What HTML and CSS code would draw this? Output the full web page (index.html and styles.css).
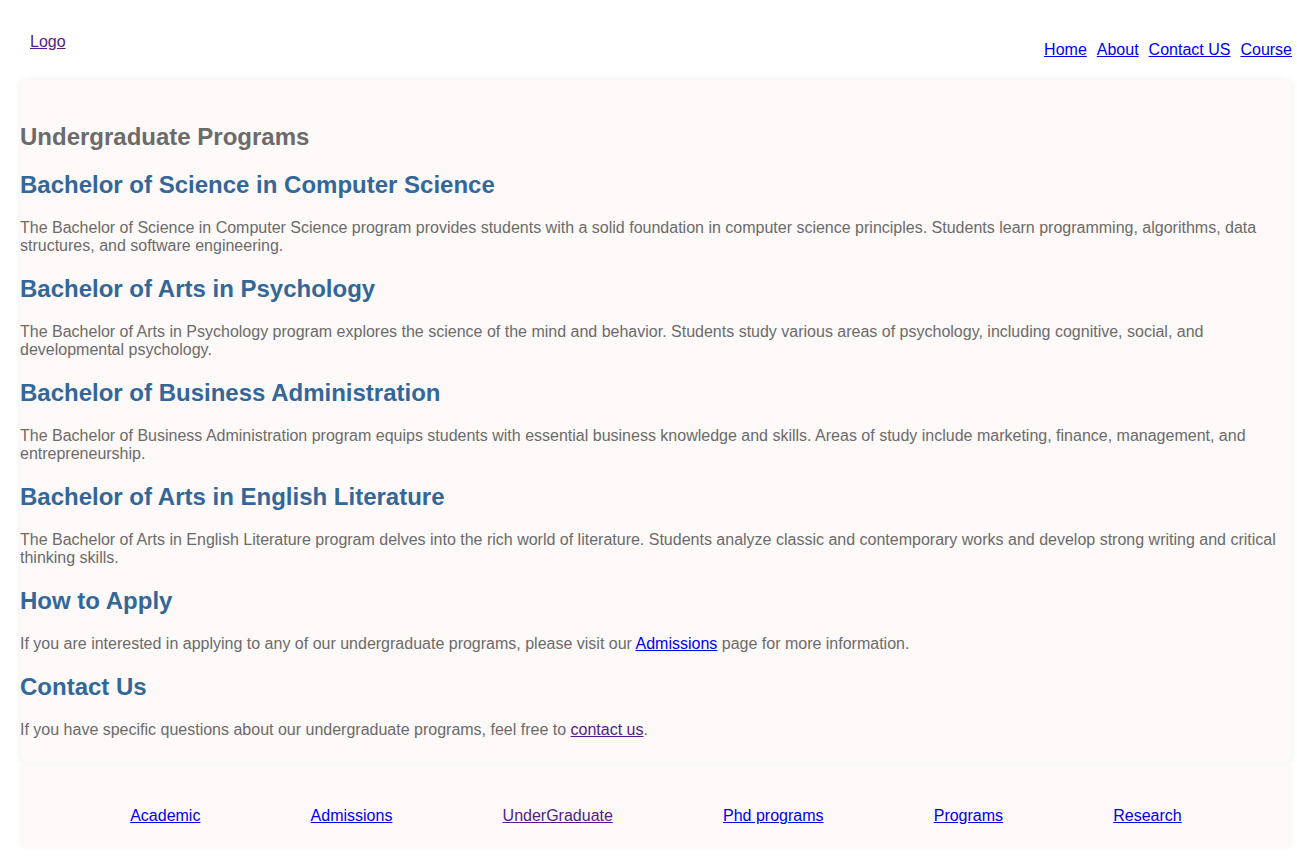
FILE: index.html
```html
<!DOCTYPE html>
<html lang="en">
<head>
<meta charset="utf-8">
<title>Undergraduate Programs</title>
<link rel="stylesheet" href="styles.css">
</head>
<body>
<div class="page">
  <header class="site-header">
    <a class="logo visited" href="#">Logo</a>
    <nav class="top-nav">
      <a href="#">Home</a>
      <a href="#">About</a>
      <a href="#">Contact US</a>
      <a href="#">Course</a>
    </nav>
  </header>
  <main class="card">
    <h2 class="page-title">Undergraduate Programs</h2>
    <h2 class="program">Bachelor of Science in Computer Science</h2>
    <p>The Bachelor of Science in Computer Science program provides students with a solid foundation in computer science principles. Students learn programming, algorithms, data structures, and software engineering.</p>
    <h2 class="program">Bachelor of Arts in Psychology</h2>
    <p>The Bachelor of Arts in Psychology program explores the science of the mind and behavior. Students study various areas of psychology, including cognitive, social, and developmental psychology.</p>
    <h2 class="program">Bachelor of Business Administration</h2>
    <p>The Bachelor of Business Administration program equips students with essential business knowledge and skills. Areas of study include marketing, finance, management, and entrepreneurship.</p>
    <h2 class="program">Bachelor of Arts in English Literature</h2>
    <p>The Bachelor of Arts in English Literature program delves into the rich world of literature. Students analyze classic and contemporary works and develop strong writing and critical thinking skills.</p>
    <h2 class="program">How to Apply</h2>
    <p>If you are interested in applying to any of our undergraduate programs, please visit our <a href="#">Admissions</a> page for more information.</p>
    <h2 class="program">Contact Us</h2>
    <p>If you have specific questions about our undergraduate programs, feel free to <a class="visited" href="#">contact us</a>.</p>
  </main>
  <footer class="site-footer">
    <a href="#">Academic</a>
    <a href="#">Admissions</a>
    <a class="visited" href="#">UnderGraduate</a>
    <a href="#">Phd programs</a>
    <a href="#">Programs</a>
    <a href="#">Research</a>
  </footer>
</div>
</body>
</html>
```
FILE: styles.css
```css
html, body {
  margin: 0;
  padding: 0;
  background: #ffffff;
}

body {
  font-family: "Liberation Sans", Arial, sans-serif;
  font-size: 16px;
  color: #6b6b6b;
}

a {
  color: #0000ee;
  text-decoration: underline;
}

a.visited {
  color: #551a8b;
}

.page {
  padding: 0 5px 20px 20px;
}

.site-header {
  display: flex;
  justify-content: space-between;
  align-items: flex-start;
  height: 80px;
}

.logo {
  margin: 33px 0 0 10px;
}

.top-nav {
  display: flex;
  gap: 10px;
  margin-top: 41px;
}

.card {
  background: #fdf9f8;
  border-radius: 8px;
  box-shadow: 0 0 6px rgba(0, 0, 0, 0.08);
  padding: 23px 0 8px;
  display: flow-root;
}

.card h2 {
  font-size: 24px;
  font-weight: bold;
  margin: 20px 0;
}

.card .page-title {
  color: #6b6b6b;
}

.card .program {
  color: #336699;
}

.card p {
  margin: 16px 0;
}

.site-footer {
  margin-top: 4px;
  background: #fdf9f8;
  box-shadow: 0 0 6px rgba(0, 0, 0, 0.04);
  display: flex;
  justify-content: space-evenly;
  height: 80px;
  box-sizing: border-box;
  padding-top: 40px;
}
```
